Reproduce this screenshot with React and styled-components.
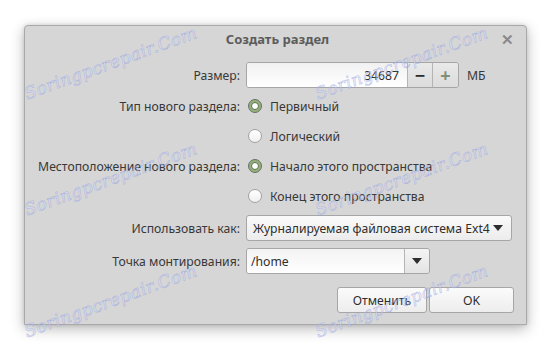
import React from "react";
import styled, { createGlobalStyle } from "styled-components";

const Global = createGlobalStyle`
  html, body { margin: 0; padding: 0; background: #ffffff; }
  body { font-family: "Noto Sans", "Open Sans", sans-serif; }
  * { box-sizing: border-box; }
`;

const Page = styled.div`
  position: relative;
  width: 551px;
  height: 350px;
  padding: 25px 0 0 24px;
  overflow: hidden;
`;

const Window = styled.div`
  width: 503px;
  height: 300px;
  background: #d6d6d6;
  border: 1px solid #a9a9a9;
  border-radius: 4px 4px 0 0;
  box-shadow: 0 4px 14px rgba(0, 0, 0, 0.28), 0 0 4px rgba(0, 0, 0, 0.12);
  display: flex;
  flex-direction: column;
  color: #383838;
  font-size: 12.2px;
`;

const TitleBar = styled.div`
  height: 26px;
  display: flex;
  align-items: center;
  justify-content: center;
  position: relative;
`;

const Title = styled.div`
  font-weight: bold;
  color: #5c5c5c;
  font-size: 13px;
  padding-left: 4px;
`;

const Close = styled.div`
  position: absolute;
  right: 12px;
  top: 5px;
  color: #8a8a8a;
  font-size: 15px;
  font-weight: bold;
  line-height: 16px;
`;

const Form = styled.div`
  display: flex;
  flex-direction: column;
  padding: 10px 12px 0 0;
`;

const Row = styled.div`
  display: grid;
  grid-template-columns: 215px 1fr;
  column-gap: 6px;
  align-items: center;
  height: ${(p) => p.$h}px;
  margin-top: ${(p) => p.$mt || 0}px;
`;

const Label = styled.div`
  text-align: right;
  white-space: nowrap;
`;

const Controls = styled.div`
  display: flex;
  align-items: center;
  height: 100%;
`;

const SpinBox = styled.div`
  display: flex;
  height: 26px;
  width: 213px;
  border: 1px solid #a6a6a6;
  border-radius: 3px;
  overflow: hidden;
`;

const SpinEntry = styled.div`
  flex: 1;
  background: linear-gradient(#f1f1f1, #ffffff);
  display: flex;
  align-items: center;
  justify-content: flex-end;
  padding-right: 8px;
  color: #2e2e2e;
`;

const SpinButton = styled.div`
  width: ${(p) => p.$w}px;
  border-left: 1px solid #b4b4b4;
  background: linear-gradient(#e9e9e9, #dcdcdc);
  display: flex;
  align-items: center;
  justify-content: center;
  font-size: 18px;
  font-weight: bold;
  color: ${(p) => p.$color};
  line-height: 1;
`;

const Unit = styled.span`
  margin-left: 8px;
`;

const RadioItem = styled.div`
  display: flex;
  align-items: center;
  gap: 8px;
  margin-left: 2px;
`;

const RadioDot = styled.span`
  width: 14px;
  height: 14px;
  border-radius: 50%;
  border: 1px solid ${(p) => (p.$on ? "#6d6d6d" : "#a2a2a2")};
  background: ${(p) => (p.$on ? "#91b476" : "linear-gradient(#ffffff, #f0f0f0)")};
  display: flex;
  align-items: center;
  justify-content: center;
  &::after {
    content: "";
    display: ${(p) => (p.$on ? "block" : "none")};
    width: 6px;
    height: 6px;
    border-radius: 50%;
    background: #ffffff;
    border: 1px solid #5f6b55;
  }
`;

const Combo = styled.div`
  width: 266px;
  height: 26px;
  border: 1px solid #a6a6a6;
  border-radius: 3px;
  background: linear-gradient(#fafafa, #ececec);
  display: flex;
  align-items: center;
  justify-content: space-between;
  padding: 0 8px 0 6px;
  color: #2e2e2e;
  white-space: nowrap;
`;

const Arrow = styled.span`
  width: 0;
  height: 0;
  border-left: 5px solid transparent;
  border-right: 5px solid transparent;
  border-top: 6px solid #2e2e2e;
`;

const EntryCombo = styled.div`
  width: 184px;
  height: 26px;
  border: 1px solid #a6a6a6;
  border-radius: 3px;
  overflow: hidden;
  display: flex;
`;

const EntryText = styled.div`
  flex: 1;
  background: linear-gradient(#f3f3f3, #ffffff);
  display: flex;
  align-items: center;
  padding-left: 4px;
  color: #2e2e2e;
`;

const EntryButton = styled.div`
  width: 25px;
  border-left: 1px solid #b4b4b4;
  background: linear-gradient(#f4f4f4, #e4e4e4);
  display: flex;
  align-items: center;
  justify-content: center;
`;

const ButtonRow = styled.div`
  display: flex;
  justify-content: flex-end;
  gap: 2px;
  margin-top: 13px;
`;

const Button = styled.div`
  width: ${(p) => p.$w}px;
  height: 26px;
  border: 1px solid #a6a6a6;
  border-radius: 3px;
  background: linear-gradient(#fbfbfb, #ededed);
  display: flex;
  align-items: center;
  justify-content: center;
  color: #2e2e2e;
`;

const Watermark = styled.div`
  position: absolute;
  left: ${(p) => p.$x}px;
  top: ${(p) => p.$y}px;
  transform: rotate(-20deg);
  transform-origin: left center;
  font-family: "DejaVu Serif", serif;
  font-style: italic;
  font-size: 17px;
  letter-spacing: 0.5px;
  color: rgba(232, 236, 255, 0.45);
  -webkit-text-stroke: 0.6px rgba(130, 145, 215, 0.5);
  pointer-events: none;
  white-space: nowrap;
`;

const marks = [
  [25, 84], [316, 84],
  [25, 200], [316, 200],
  [25, 322], [316, 322],
];

export default function App() {
  return (
    <>
      <Global />
      <Page>
        <Window>
          <TitleBar>
            <Title>Создать раздел</Title>
            <Close>✕</Close>
          </TitleBar>
          <Form>
            <Row $h={26}>
              <Label>Размер:</Label>
              <Controls>
                <SpinBox>
                  <SpinEntry>34687</SpinEntry>
                  <SpinButton $w={25} $color="#2a2a2a">−</SpinButton>
                  <SpinButton $w={26} $color="#7f8f75">+</SpinButton>
                </SpinBox>
                <Unit>МБ</Unit>
              </Controls>
            </Row>
            <Row $h={30} $mt={3}>
              <Label>Тип нового раздела:</Label>
              <RadioItem><RadioDot $on />Первичный</RadioItem>
            </Row>
            <Row $h={30}>
              <Label />
              <RadioItem><RadioDot />Логический</RadioItem>
            </Row>
            <Row $h={30}>
              <Label>Местоположение нового раздела:</Label>
              <RadioItem><RadioDot $on />Начало этого пространства</RadioItem>
            </Row>
            <Row $h={30}>
              <Label />
              <RadioItem><RadioDot />Конец этого пространства</RadioItem>
            </Row>
            <Row $h={26} $mt={4}>
              <Label>Использовать как:</Label>
              <Combo>
                <span>Журналируемая файловая система Ext4</span>
                <Arrow />
              </Combo>
            </Row>
            <Row $h={26} $mt={7}>
              <Label>Точка монтирования:</Label>
              <EntryCombo>
                <EntryText>/home</EntryText>
                <EntryButton><Arrow /></EntryButton>
              </EntryCombo>
            </Row>
            <ButtonRow>
              <Button $w={90}>Отменить</Button>
              <Button $w={85}>OK</Button>
            </ButtonRow>
          </Form>
        </Window>
        {marks.map(([x, y], i) => (
          <Watermark key={i} $x={x} $y={y}>Soringpcrepair.Com</Watermark>
        ))}
      </Page>
    </>
  );
}
